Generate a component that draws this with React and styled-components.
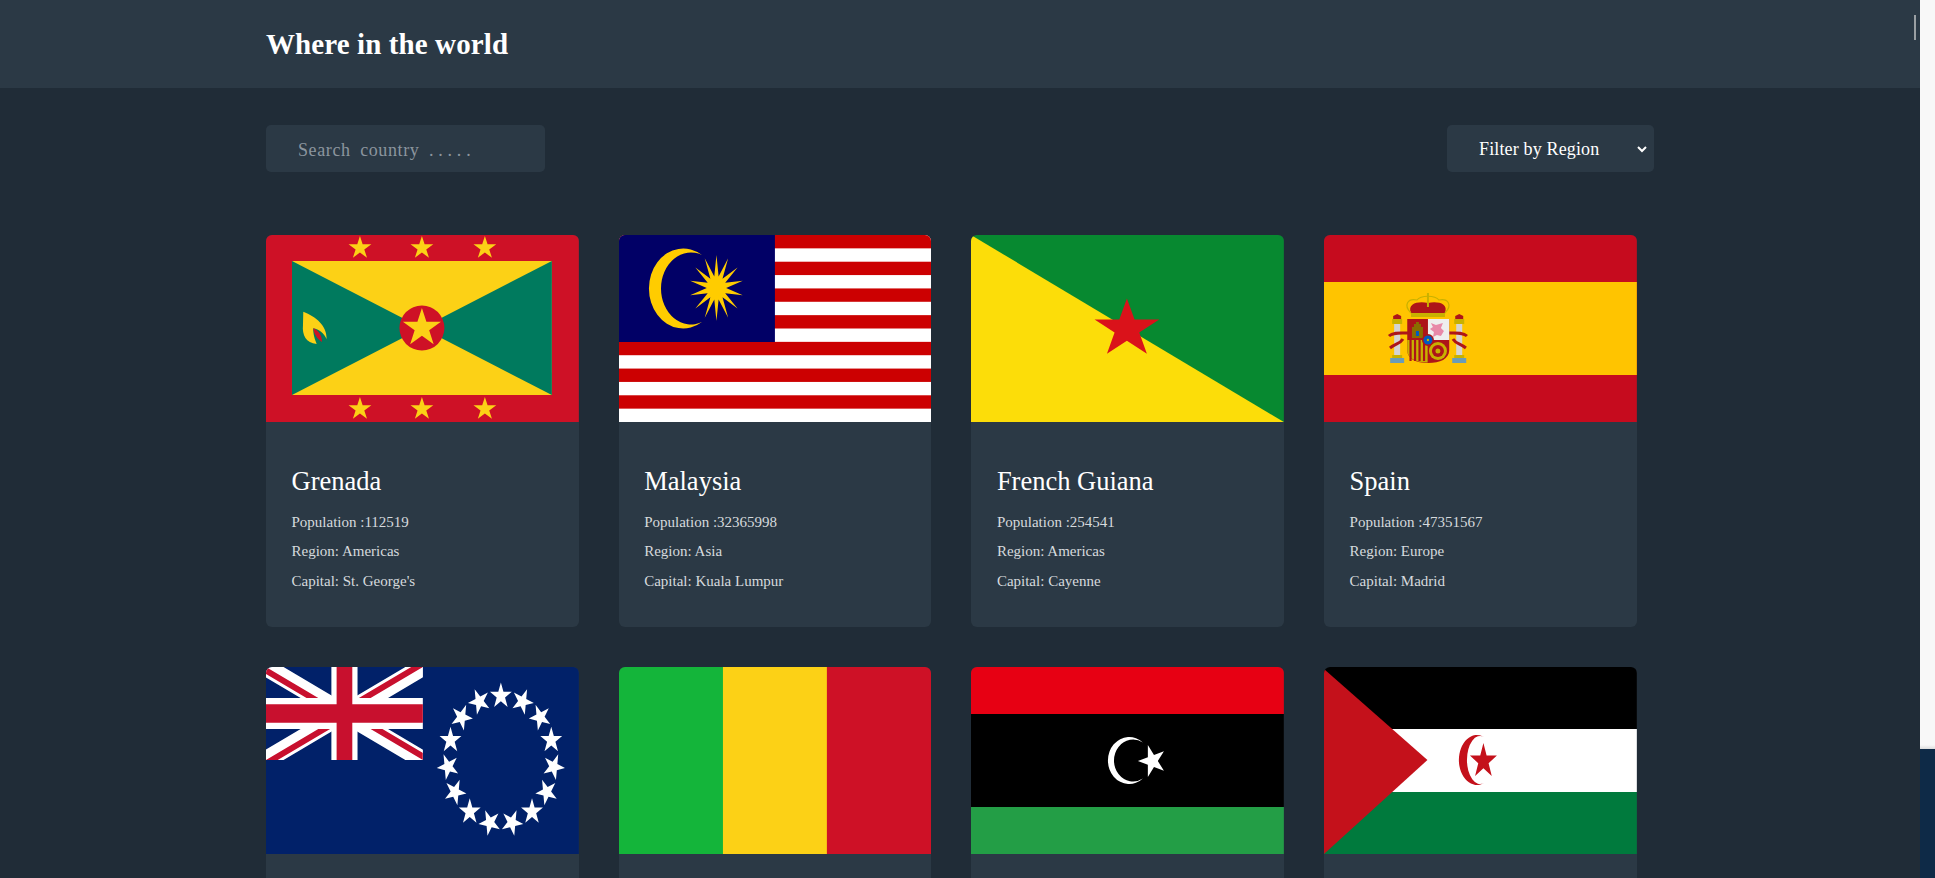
import React from 'react';
import styled, { createGlobalStyle } from 'styled-components';

const GlobalStyle = createGlobalStyle`
  html, body {
    margin: 0;
    height: 100%;
    overflow: hidden;
    background: #202c37;
  }
  #root {
    height: 100%;
  }
  * {
    box-sizing: border-box;
  }
`;

const serif = `"Liberation Serif", "Times New Roman", serif`;

const Page = styled.div`
  display: flex;
  height: 100vh;
  font-family: ${serif};
`;

const Main = styled.div`
  position: relative;
  width: 1920px;
  flex: none;
  background: #202c37;
  overflow: hidden;
`;

const Header = styled.header`
  height: 88px;
  background: #2b3945;
  display: flex;
  align-items: center;
`;

const Container = styled.div`
  width: 1388px;
  margin: 0 auto;
`;

const Title = styled.h1`
  margin: 0;
  color: #fff;
  font-size: 29px;
  font-weight: 700;
  letter-spacing: 0.1px;
`;

const Toolbar = styled.div`
  display: flex;
  justify-content: space-between;
  padding: 37px 0 63px;
`;

const SearchInput = styled.input`
  width: 279px;
  height: 47px;
  padding: 3px 32px 0;
  border: 0;
  border-radius: 5px;
  outline: 0;
  background: #2b3945;
  color: #fff;
  font-family: ${serif};
  font-size: 18px;
  letter-spacing: 0.6px;
  word-spacing: 4.5px;

  &::placeholder {
    color: #8b959e;
    opacity: 1;
  }
`;

const SelectWrap = styled.div`
  position: relative;
  width: 207px;
  height: 47px;
`;

const RegionSelect = styled.select`
  appearance: none;
  width: 100%;
  height: 100%;
  padding: 0 32px;
  border: 0;
  border-radius: 5px;
  outline: 0;
  background: #2b3945;
  color: #fff;
  font-family: ${serif};
  font-size: 18px;
  letter-spacing: 0.15px;
`;

const Chevron = styled.svg`
  position: absolute;
  top: 21px;
  right: 7px;
  width: 10px;
  height: 7px;
  pointer-events: none;
`;

const Grid = styled.div`
  display: grid;
  grid-template-columns: repeat(4, 312.5px);
  gap: 40px 40.2px;
`;

const Card = styled.article`
  height: 392px;
  border-radius: 6px;
  background: #2b3945;
  overflow: hidden;
`;

const FlagSvg = styled.svg`
  display: block;
  width: 100%;
  height: 187px;
`;

const CardBody = styled.div`
  padding: 45px 25.5px 0;
`;

const CountryName = styled.h2`
  margin: 0 0 12.5px;
  color: #fff;
  font-size: 26.5px;
  line-height: 28px;
  font-weight: 400;
`;

const Fact = styled.p`
  margin: 0;
  color: #d6dadd;
  font-size: 15px;
  line-height: 29.5px;
`;

const SideStrip = styled.div`
  flex: 1;
  display: flex;
  flex-direction: column;
`;

const StripTop = styled.div`
  height: 749px;
  background: linear-gradient(#f8f8f8 0 745px, #dcdcdc);
`;

const StripBottom = styled.div`
  flex: 1;
  background: #0e2a47;
`;

const ScrollThumb = styled.div`
  position: absolute;
  top: 15px;
  right: 4px;
  width: 2px;
  height: 25px;
  background: #9a9fa3;
`;

// star polygon, rx/ry because the flags are stretched into the card
const star = (cx, cy, rx, ry, rot = 0, n = 5, inner = 0.382) => {
  const pts = [];
  for (let i = 0; i < n * 2; i++) {
    const r = i % 2 ? inner : 1;
    const a = rot + (i * Math.PI) / n;
    pts.push(`${(cx + rx * r * Math.sin(a)).toFixed(2)},${(cy - ry * r * Math.cos(a)).toFixed(2)}`);
  }
  return pts.join(' ');
};

const Flag = ({ children }) => (
  <FlagSvg viewBox="0 0 312.67 187" preserveAspectRatio="none">
    {children}
  </FlagSvg>
);

const Grenada = () => (
  <Flag>
    <rect width="313" height="187" fill="#ce1126" />
    <rect x="26" y="26" width="260" height="134" fill="#fcd116" />
    <polygon points="26,26 156,93 26,160" fill="#007a5e" />
    <polygon points="286,26 156,93 286,160" fill="#007a5e" />
    <circle cx="156" cy="93" r="22.5" fill="#ce1126" />
    <polygon points={star(156, 93, 20, 20)} fill="#fcd116" />
    {[94, 156, 219].map((x) => (
      <g key={x} fill="#fcd116">
        <polygon points={star(x, 13, 12, 12)} />
        <polygon points={star(x, 174, 12, 12)} />
      </g>
    ))}
    <path d="M37.3 76.7C50 82 61 90 60.7 104.3 58 98 53 94 47.3 93.3 47 99 49 105 50.7 109 40 108 36 100 37 90Z" fill="#fcd116" />
    <path d="M47.3 93.3C52 95 56 100 56 107 51 104 48 99 47.3 93.3Z" fill="#ce1126" />
  </Flag>
);

const Malaysia = () => (
  <Flag>
    <rect width="313" height="187" fill="#fff" />
    {[0, 2, 4, 6, 8, 10, 12].map((i) => (
      <rect key={i} y={(i * 187) / 14} width="313" height={187 / 14} fill="#cc0001" />
    ))}
    <rect width="156" height="107" fill="#010066" />
    <path d="M83 20A34.3 40 0 1 0 83 87 30 36 0 1 1 83 20Z" fill="#fc0" />
    <polygon points={star(97.5, 53, 27, 33, 0, 14, 0.36)} fill="#fc0" />
  </Flag>
);

const FrenchGuiana = () => (
  <Flag>
    <rect width="313" height="187" fill="#078930" />
    <polygon points="0,0 313,187 0,187" fill="#fcdd09" />
    <polygon points={star(156, 94, 34, 30.5)} fill="#da121a" />
  </Flag>
);

const Spain = () => (
  <Flag>
    <rect width="313" height="187" fill="#c60b1e" />
    <rect y="47" width="313" height="93" fill="#ffc400" />
    {/* pillars */}
    {[73.2, 135.3].map((x) => (
      <g key={x}>
        <path d={`M${x - 4} 84V81L${x} 79 ${x + 4} 81V84Z`} fill="#ad1519" />
        <rect x={x - 5} y="84" width="10" height="5" fill="#c8b100" />
        <rect x={x - 3} y="89" width="6" height="31" fill="#d4d4d4" />
        <rect x={x - 5} y="120" width="10" height="3" fill="#c8b100" />
        <rect x={x - 7} y="123" width="14" height="5" fill="#6a9cb8" />
      </g>
    ))}
    {/* ribbons */}
    <g fill="none" stroke="#ad1519" strokeWidth="3">
      <path d="M65 101C69 97 77 98 84 98" />
      <path d="M66 113C72 108 76 109 79 104" />
      <path d="M143 101C139 97 131 98 124 98" />
      <path d="M142 113C136 108 132 109 129 104" />
    </g>
    {/* crown */}
    <path d="M87 78C83 68 95 66 104 68 113 66 125 68 121 78Z" fill="#ad1519" />
    <path d="M87 78C79 70 84 63 93 65 97 60 111 60 115 65 124 63 129 70 121 78" fill="none" stroke="#c8b100" strokeWidth="1.2" />
    <path d="M104 58V72" stroke="#c8b100" strokeWidth="2" />
    <rect x="87" y="78" width="34" height="4" fill="#c8b100" />
    {/* shield */}
    <path d="M83.3 84H125.3V115C125.3 124 116 128 104.3 128 92 128 83.3 124 83.3 115Z" fill="#ad1519" />
    <rect x="104" y="84" width="21.3" height="21" fill="#eee" />
    <path d="M107 88l5 2 7-2-2 5 3 3-3 5-4-1-4 2 1-5-4-3 3-2Z" fill="#e889a8" />
    <path d="M83.3 105H103.7V127.6C92 127 83.3 124 83.3 115Z" fill="#c8b100" />
    {[85.5, 90, 94.5, 99].map((x) => (
      <rect key={x} x={x} y="105" width="2.2" height="21" fill="#ad1519" />
    ))}
    <circle cx="114" cy="116" r="9" fill="#c8b100" />
    <circle cx="114" cy="116" r="6" fill="#ad1519" />
    <circle cx="114" cy="116" r="2.5" fill="#c8b100" />
    <path d="M88 103V92H90V89H92V87H95V89H97V92H99V103Z" fill="#8a6d00" />
    <rect x="92" y="96" width="3" height="5" fill="#005bbf" />
    <circle cx="104" cy="105" r="6" fill="#ad1519" />
    <circle cx="104" cy="105" r="4.5" fill="#005bbf" />
    <circle cx="104" cy="105" r="1.2" fill="#c8b100" />
  </Flag>
);

const cookStars = Array.from({ length: 15 }, (_, i) => {
  const a = (i * 2 * Math.PI) / 15;
  return star(235 + 53 * Math.sin(a), 93 - 64 * Math.cos(a), 11.5, 13.5, a);
});

const CookIslands = () => (
  <Flag>
    <rect width="313" height="187" fill="#012169" />
    <svg x="0" y="0" width="157" height="93" viewBox="0 0 60 30" preserveAspectRatio="none">
      <clipPath id="ujack">
        <path d="M30 15H60V30ZV30H0ZH0V0ZV0H60Z" />
      </clipPath>
      <path d="M0 0L60 30M60 0L0 30" stroke="#fff" strokeWidth="6" />
      <path d="M0 0L60 30M60 0L0 30" stroke="#c8102e" strokeWidth="4" clipPath="url(#ujack)" />
      <path d="M30 0V30M0 15H60" stroke="#fff" strokeWidth="10" />
      <path d="M30 0V30M0 15H60" stroke="#c8102e" strokeWidth="6" />
    </svg>
    {cookStars.map((points, i) => (
      <polygon key={i} points={points} fill="#fff" />
    ))}
  </Flag>
);

const Mali = () => (
  <Flag>
    <rect width="105" height="187" fill="#14b53a" />
    <rect x="104" width="105" height="187" fill="#fcd116" />
    <rect x="208" width="105" height="187" fill="#ce1126" />
  </Flag>
);

const Libya = () => (
  <Flag>
    <rect width="313" height="47" fill="#e70013" />
    <rect y="47" width="313" height="93" fill="#000" />
    <rect y="140" width="313" height="47" fill="#239e46" />
    <path d="M172 75.5A21.3 23.5 0 1 0 172 111.5 19.1 21 0 1 1 172 75.5Z" fill="#fff" />
    <polygon points={star(181.4, 94, 14.4, 16.8, -Math.PI / 2)} fill="#fff" />
  </Flag>
);

const WesternSahara = () => (
  <Flag>
    <rect width="313" height="62" fill="#000" />
    <rect y="62" width="313" height="63" fill="#fff" />
    <rect y="125" width="313" height="62" fill="#007a3d" />
    <polygon points="0,2 103.5,93 0,187" fill="#c4111b" />
    <path d="M160 70A18 25 0 1 0 160 116 13.2 24 0 1 1 160 70Z" fill="#c4111b" />
    <polygon points={star(159.5, 94.2, 14.2, 18.2)} fill="#c4111b" />
  </Flag>
);

const countries = [
  { flag: Grenada, name: 'Grenada', population: 112519, region: 'Americas', capital: "St. George's" },
  { flag: Malaysia, name: 'Malaysia', population: 32365998, region: 'Asia', capital: 'Kuala Lumpur' },
  { flag: FrenchGuiana, name: 'French Guiana', population: 254541, region: 'Americas', capital: 'Cayenne' },
  { flag: Spain, name: 'Spain', population: 47351567, region: 'Europe', capital: 'Madrid' },
  // second row runs off the bottom of the page, only the flags show
  { flag: CookIslands },
  { flag: Mali },
  { flag: Libya },
  { flag: WesternSahara },
];

const App = () => {
  return (
    <Page>
      <GlobalStyle />
      <Main>
        <Header>
          <Container>
            <Title>Where in the world</Title>
          </Container>
        </Header>
        <Container>
          <Toolbar>
            <SearchInput placeholder={'Search country .\u2009.\u2009.\u2009.\u2009.'} />
            <SelectWrap>
              <RegionSelect defaultValue="">
                <option value="">Filter by Region</option>
                <option value="Africa">Africa</option>
                <option value="Americas">Americas</option>
                <option value="Asia">Asia</option>
                <option value="Europe">Europe</option>
                <option value="Oceania">Oceania</option>
              </RegionSelect>
              <Chevron viewBox="0 0 10 7">
                <path d="M1 1L5 5 9 1" fill="none" stroke="#fff" strokeWidth="2" />
              </Chevron>
            </SelectWrap>
          </Toolbar>
          <Grid>
            {countries.map(({ flag: FlagImage, name, population, region, capital }, i) => (
              <Card key={i}>
                <FlagImage />
                {name && (
                  <CardBody>
                    <CountryName>{name}</CountryName>
                    <Fact>Population :{population}</Fact>
                    <Fact>Region: {region}</Fact>
                    <Fact>Capital: {capital}</Fact>
                  </CardBody>
                )}
              </Card>
            ))}
          </Grid>
        </Container>
        <ScrollThumb />
      </Main>
      <SideStrip>
        <StripTop />
        <StripBottom />
      </SideStrip>
    </Page>
  );
};

export default App;
